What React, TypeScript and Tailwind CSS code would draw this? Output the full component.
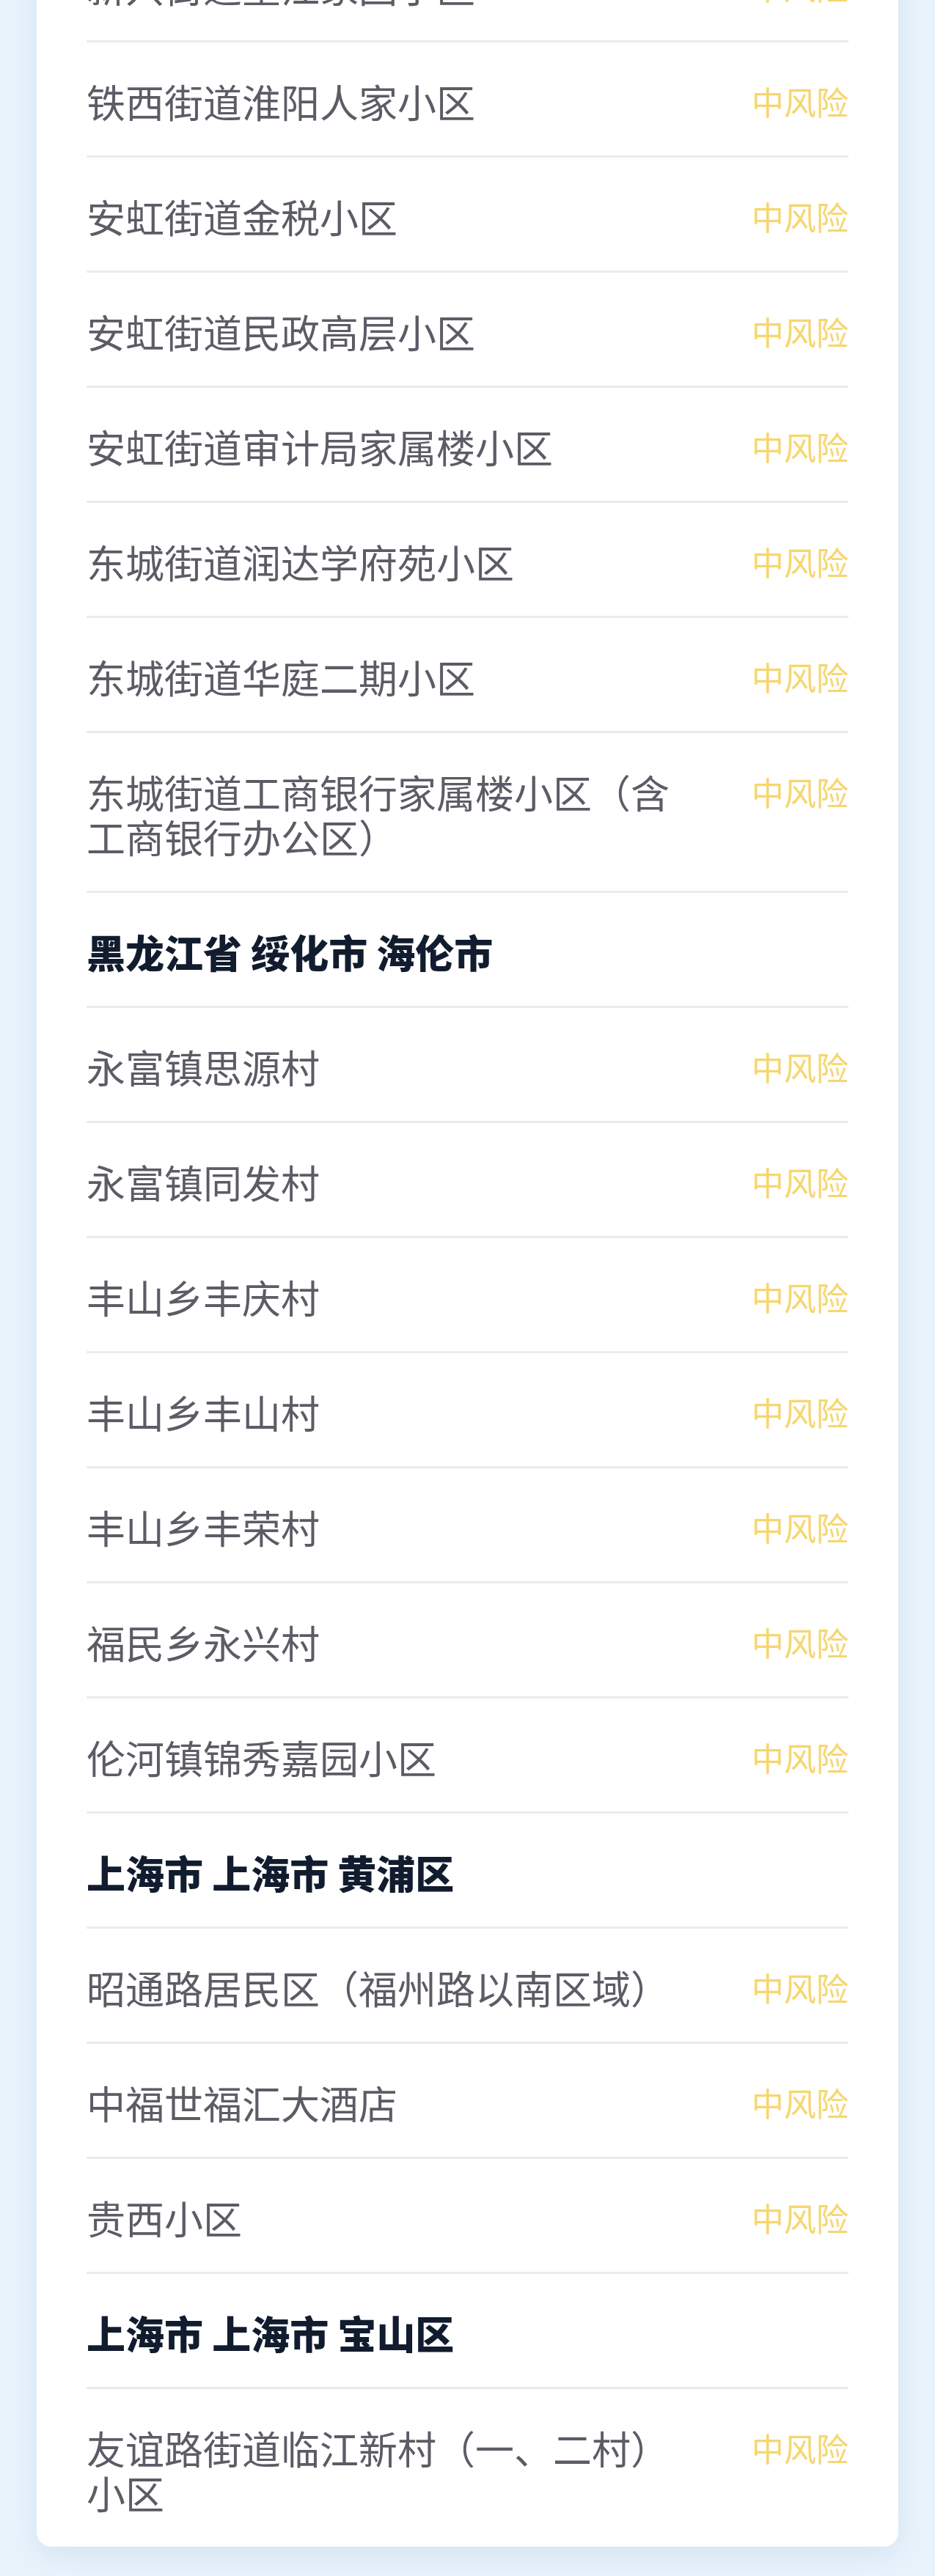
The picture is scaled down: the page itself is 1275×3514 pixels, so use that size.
type Item = { kind: 'area'; name: string } | { kind: 'place'; name: string };

const items: Item[] = [
  { kind: 'place', name: '新兴街道望江家园小区' },
  { kind: 'place', name: '铁西街道淮阳人家小区' },
  { kind: 'place', name: '安虹街道金税小区' },
  { kind: 'place', name: '安虹街道民政高层小区' },
  { kind: 'place', name: '安虹街道审计局家属楼小区' },
  { kind: 'place', name: '东城街道润达学府苑小区' },
  { kind: 'place', name: '东城街道华庭二期小区' },
  { kind: 'place', name: '东城街道工商银行家属楼小区（含工商银行办公区）' },
  { kind: 'area', name: '黑龙江省 绥化市 海伦市' },
  { kind: 'place', name: '永富镇思源村' },
  { kind: 'place', name: '永富镇同发村' },
  { kind: 'place', name: '丰山乡丰庆村' },
  { kind: 'place', name: '丰山乡丰山村' },
  { kind: 'place', name: '丰山乡丰荣村' },
  { kind: 'place', name: '福民乡永兴村' },
  { kind: 'place', name: '伦河镇锦秀嘉园小区' },
  { kind: 'area', name: '上海市 上海市 黄浦区' },
  { kind: 'place', name: '昭通路居民区（福州路以南区域）' },
  { kind: 'place', name: '中福世福汇大酒店' },
  { kind: 'place', name: '贵西小区' },
  { kind: 'area', name: '上海市 上海市 宝山区' },
  { kind: 'place', name: '友谊路街道临江新村（一、二村）小区' },
];

export default function App() {
  return (
    <div
      className="min-h-[3514px] bg-[#e9f3fc] overflow-hidden"
      style={{ fontFamily: '"Noto Sans CJK SC", "Noto Sans", sans-serif' }}
    >
      {/* list is scrolled: the first row sits partly above the top edge */}
      <div className="mx-[50px] -mt-[99px] rounded-[20px] bg-white px-[68px] shadow-[0_12px_40px_rgba(120,160,200,0.18)]">
        {items.map((item, i) => {
          const last = i === items.length - 1;
          return (
            <div
              key={i}
              className={`flex items-start justify-between pt-[50px] pb-[43px] ${
                last ? '' : 'border-b-[3px] border-[#ebebeb]'
              }`}
            >
              {item.kind === 'area' ? (
                <div className="text-[53px] leading-[61px] font-black text-[#111c2e]">{item.name}</div>
              ) : (
                <>
                  <div className="flex-1 min-w-0 pr-[80px] text-[53px] leading-[61px] text-[#5c5c66]">
                    {item.name}
                  </div>
                  <div className="shrink-0 text-[44px] leading-[61px] text-[#f6d66e]">中风险</div>
                </>
              )}
            </div>
          );
        })}
      </div>
    </div>
  );
}
